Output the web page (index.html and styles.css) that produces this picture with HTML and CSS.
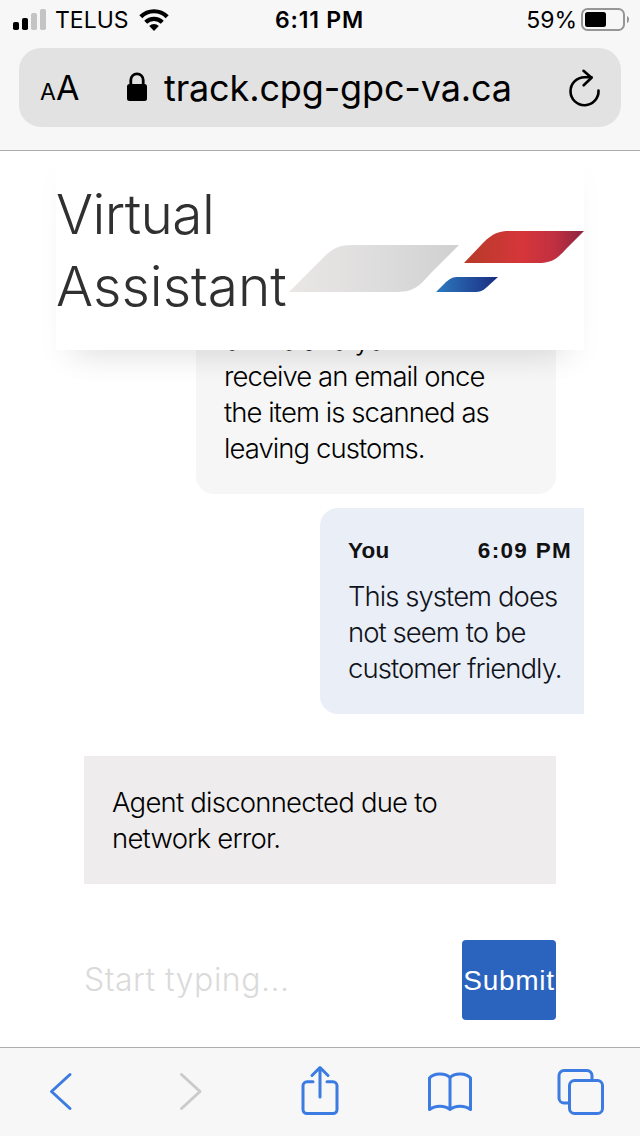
FILE: index.html
```html
<!DOCTYPE html>
<html lang="en">
<head>
<meta charset="utf-8">
<title>Virtual Assistant</title>
<link rel="stylesheet" href="styles.css">
</head>
<body>
<div class="screen">
  <div class="browser-top">
    <div class="status">
      <div class="carrier">
        <svg width="34" height="22" viewBox="0 0 34 22"><rect x="0" y="13" width="6" height="8" rx="1.8"/><rect x="9" y="9" width="6" height="12" rx="1.8"/><rect x="18" y="4" width="6" height="17" rx="1.8" fill="#c4c4c4"/><rect x="27" y="0" width="6" height="21" rx="1.8" fill="#c4c4c4"/></svg>
        <span class="carrier-name">TELUS</span>
        <svg class="wifi" width="30" height="22" viewBox="0 0 30 22"><g fill="none" stroke="#000" stroke-width="4.2"><path d="M1.8 7.8a18.5 18.5 0 0 1 26.4 0"/><path d="M6.7 13.2a11.8 11.8 0 0 1 16.6 0"/></g><path d="M15 22l-4.8-4.9a6.8 6.8 0 0 1 9.6 0z"/></svg>
      </div>
      <div class="time">6:11 PM</div>
      <div class="battery">
        <span>59%</span>
        <svg width="48" height="24" viewBox="0 0 48 24"><rect x="1" y="1" width="42" height="21" rx="5.5" fill="none" stroke="#969696" stroke-width="2"/><rect x="4" y="4" width="21" height="15" rx="2.5"/><path d="M46 8c2.800 1 2.800 6 0 7z" fill="#969696"/></svg>
      </div>
    </div>
    <div class="address">
      <div class="aa"><span class="small-a">A</span><span class="big-a">A</span></div>
      <svg class="lock" width="20" height="30" viewBox="0 0 20 30"><rect x="0" y="12" width="20" height="17" rx="2.5"/><path d="M3.8 13V8a6.2 6.2 0 0 1 12.400 0v5" fill="none" stroke="#000" stroke-width="2.8"/></svg>
      <span class="url">track.cpg-gpc-va.ca</span>
      <svg class="reload" width="32" height="38" viewBox="0 0 32 38"><g fill="none" stroke="#000" stroke-width="2.6" stroke-linecap="round" stroke-linejoin="round"><path d="M29.500 21.500A14 14 0 1 1 15.500 8.200h7"/><path d="M14.500 1.800l8 6.900-7.800 7.600"/></g></svg>
    </div>
  </div>
  <main class="page">
    <div class="assistant">
      <header class="head">
        <h1><span class="first">Virtual</span><br>Assistant</h1>
        <svg class="logo" width="296" height="64" viewBox="0 0 296 64">
          <defs>
            <linearGradient id="gray"><stop offset="0" stop-color="#e9e7e6"/><stop offset=".6" stop-color="#dcdbdb"/><stop offset="1" stop-color="#d0d0d0"/></linearGradient>
            <linearGradient id="red"><stop offset="0" stop-color="#b63b28"/><stop offset=".48" stop-color="#d6363a"/><stop offset=".75" stop-color="#c13040"/><stop offset="1" stop-color="#8c2340"/></linearGradient>
            <linearGradient id="blue"><stop offset="0" stop-color="#2d7ac0"/><stop offset="1" stop-color="#1a2c80"/></linearGradient>
          </defs>
          <path fill="url(#gray)" d="M1 62L33 30C43 19 50 15 65 15H171L142 44C130 58 124 62 107 62Z"/>
          <path fill="url(#red)" d="M176 33L195 13C205 3 211 1 222 1H296L279 18C269 29 264 33 250 33Z"/>
          <path fill="url(#blue)" d="M148 62L158 52C163 48 165 47 170 47H210L199 57C195 61 192 62 186 62Z"/>
        </svg>
      </header>
      <section class="chat">
        <div class="bubble agent">online and you<br>receive an email once<br>the item is scanned as<br>leaving customs.</div>
        <div class="bubble you">
          <div class="meta"><span>You</span><span class="stamp">6:09 PM</span></div>
          <div class="words">This system does<br>not seem to be<br>customer friendly.</div>
        </div>
        <div class="notice">Agent disconnected due to<br>network error.</div>
      </section>
      <form class="composer">
        <input type="text" placeholder="Start typing..." aria-label="Message">
        <button type="button">Submit</button>
      </form>
    </div>
  </main>
  <nav class="toolbar">
    <svg viewBox="0 0 60 60"><path d="M40 14.500L21.500 31.500L40 48.500"/></svg>
    <svg class="off" viewBox="0 0 60 60"><path d="M21.500 14.500L40 31.500L21.500 48.500"/></svg>
    <svg viewBox="0 0 60 60"><path d="M23 21.800h-6a4 4 0 0 0-4 4V49.500a4 4 0 0 0 4 4h26a4 4 0 0 0 4-4V25.800a4 4 0 0 0-4-4h-6M30 37V8.500M22 15.500l8-8 8 8"/></svg>
    <svg viewBox="0 0 60 60"><path d="M30 49.500V17.500C25 12.500 14 13 9.500 18V49.500C15 45 25 45 30 49.500C35 45 45 45 50.500 49.500V18C46 13 35 12.500 30 17.500"/></svg>
    <svg viewBox="0 0 60 60"><path d="M18 43h-4a5 5 0 0 1-5-5V15.500a5 5 0 0 1 5-5H37a5 5 0 0 1 5 5V20"/><rect x="19.500" y="20.500" width="33" height="33" rx="5"/></svg>
  </nav>
</div>
</body>
</html>
```
FILE: styles.css
```css
* { box-sizing: border-box; }
body { margin: 0; font-family: Inter, "Liberation Sans", sans-serif; color: #000; }
.screen { width: 640px; height: 1136px; display: flex; flex-direction: column; background: #fff; overflow: hidden; }
.browser-top { height: 151px; flex: none; background: #f7f7f7; border-bottom: 1px solid #adadad; }
.status { height: 48px; padding: 8px 11px 0 13px; display: grid; grid-template-columns: 1fr auto 1fr; font-size: 23px; line-height: 25px; }
.carrier { display: flex; align-items: flex-start; }
.carrier svg { margin-top: 1px; }
.carrier-name { margin-left: 8px; }
.carrier .wifi { margin-left: 10px; }
.time { font-weight: 600; letter-spacing: .8px; margin-left: -3px; }
.battery { display: flex; justify-content: flex-end; gap: 4px; }
.address { margin: 0 19px; height: 79px; border-radius: 22px; background: #e2e2e2; display: flex; align-items: center; padding: 0 20px 0 21px; }
.aa { display: flex; align-items: baseline; width: 87px; line-height: 40px; padding-top: 5px; }
.small-a { font-size: 23px; }
.big-a { font-size: 34px; }
.lock { margin-top: -2px; }
.url { margin-left: 17px; font-size: 36px; letter-spacing: -.14px; white-space: nowrap; }
.reload { margin-left: auto; }
.page { flex: 1; min-height: 0; padding: 0 56px; }
.assistant { height: 100%; display: flex; flex-direction: column; }
.head { position: relative; z-index: 1; flex: none; height: 199px; padding-top: 27px; display: flex; background: #fff; box-shadow: 0 24px 30px -20px rgba(0,0,0,.11), 0 16px 32px -2px rgba(0,0,0,.025); clip-path: inset(0 -40px -60px -40px); }
h1 { margin: 0; width: 232px; flex: none; font-size: 55px; line-height: 72px; font-weight: 300; color: #303030; white-space: nowrap; }
.first { letter-spacing: -.6px; }
.logo { margin-top: 52px; flex: none; }
.chat { display: flex; flex-direction: column; font-size: 27.5px; line-height: 36px; font-weight: 300; white-space: nowrap; }
.bubble { flex: none; }
.agent { width: 360px; margin: -28px 0 0 140px; padding: 0 28px 28px; border-radius: 0 0 18px 18px; background: #f6f6f6; letter-spacing: -.93px; }
.you { margin: 14px 0 0 264px; height: 206px; padding: 25px 12px 0 28px; border-radius: 18px 0 0 18px; background: #eaeef7; }
.meta { display: flex; justify-content: space-between; font-family: "Liberation Sans", sans-serif; font-size: 22.5px; font-weight: 700; letter-spacing: 1.3px; color: #111; }
.meta span:first-child { letter-spacing: .2px; }
.words { margin-top: 9px; color: #10131a; letter-spacing: -.95px; }
.notice { margin: 42px 28px 0; height: 128px; padding: 28px; background: #eeecec; letter-spacing: -.78px; }
.composer { display: flex; margin: 56px 28px 0; height: 80px; }
input { flex: 1; min-width: 0; border: 0; padding: 0 0 2px; background: none; font: 300 32px Inter, sans-serif; letter-spacing: .5px; outline: none; }
input::placeholder { color: #dadada; opacity: 1; }
button { width: 94px; border: 0; border-radius: 4px; padding: 2px 0 0; background: #2b64be; color: #fff; font: 400 28px "Liberation Sans", sans-serif; letter-spacing: .7px; }
.toolbar { height: 89px; flex: none; border-top: 1px solid #adadad; background: #f7f7f7; display: flex; justify-content: space-between; padding: 12px 30px 0; }
.toolbar svg { width: 60px; height: 60px; fill: none; stroke: #3b7be2; stroke-width: 3; stroke-linecap: round; stroke-linejoin: round; }
.toolbar .off { stroke: #cbcbcb; }
```
